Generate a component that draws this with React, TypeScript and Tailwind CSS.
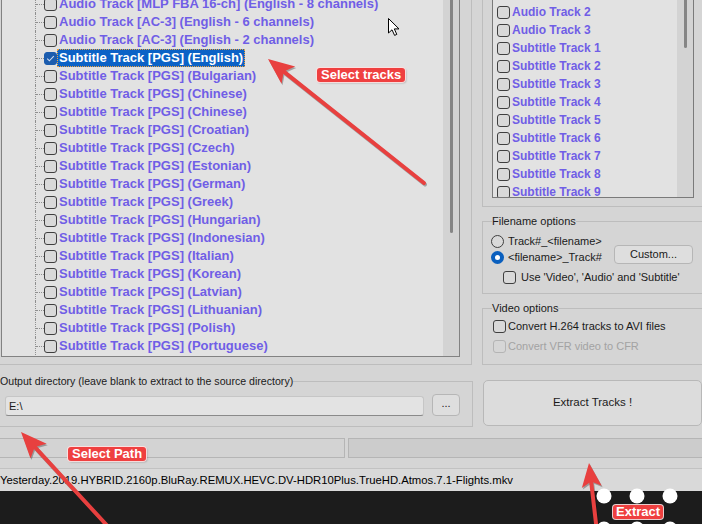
import React from "react";

const LEFT = [
  "Audio Track [MLP FBA 16-ch] (English - 8 channels)",
  "Audio Track [AC-3] (English - 6 channels)",
  "Audio Track [AC-3] (English - 2 channels)",
  "Subtitle Track [PGS] (English)",
  "Subtitle Track [PGS] (Bulgarian)",
  "Subtitle Track [PGS] (Chinese)",
  "Subtitle Track [PGS] (Chinese)",
  "Subtitle Track [PGS] (Croatian)",
  "Subtitle Track [PGS] (Czech)",
  "Subtitle Track [PGS] (Estonian)",
  "Subtitle Track [PGS] (German)",
  "Subtitle Track [PGS] (Greek)",
  "Subtitle Track [PGS] (Hungarian)",
  "Subtitle Track [PGS] (Indonesian)",
  "Subtitle Track [PGS] (Italian)",
  "Subtitle Track [PGS] (Korean)",
  "Subtitle Track [PGS] (Latvian)",
  "Subtitle Track [PGS] (Lithuanian)",
  "Subtitle Track [PGS] (Polish)",
  "Subtitle Track [PGS] (Portuguese)",
];

const RIGHT = [
  "Audio Track 2",
  "Audio Track 3",
  "Subtitle Track 1",
  "Subtitle Track 2",
  "Subtitle Track 3",
  "Subtitle Track 4",
  "Subtitle Track 5",
  "Subtitle Track 6",
  "Subtitle Track 7",
  "Subtitle Track 8",
  "Subtitle Track 9",
];

function Box({ checked = false, disabled = false }: { checked?: boolean; disabled?: boolean }) {
  if (checked) {
    return (
      <div className="flex h-[13px] w-[13px] shrink-0 items-center justify-center rounded-[3px] border border-[#1b5cae] bg-[#1b5cae]">
        <svg width="11" height="11" viewBox="0 0 11 11">
          <path d="M2.2 5.6 L4.4 7.8 L8.8 3.2" fill="none" stroke="#cfdcf0" strokeWidth="1.1" />
        </svg>
      </div>
    );
  }
  if (disabled) {
    return <div className="h-[13px] w-[13px] shrink-0 rounded-[3px] border border-[#b4b4b4] bg-[#d6d6d6]" />;
  }
  return <div className="h-[13px] w-[13px] shrink-0 rounded-[3px] border border-[#3f3f3f] bg-[#d9d9d9]" />;
}

function Arrow({ tx, ty, sx, sy, L = 26, W = 11 }: { tx: number; ty: number; sx: number; sy: number; L?: number; W?: number }) {
  const dx = tx - sx;
  const dy = ty - sy;
  const len = Math.hypot(dx, dy);
  const ux = dx / len;
  const uy = dy / len;
  const nx = -uy;
  const ny = ux;
  const bx = tx - L * ux;
  const by = ty - L * uy;
  const pts = [
    [tx, ty],
    [bx + W * nx, by + W * ny],
    [tx - 0.78 * L * ux, ty - 0.78 * L * uy],
    [bx - W * nx, by - W * ny],
  ]
    .map((p) => p.join(","))
    .join(" ");
  const ex = tx - 0.7 * L * ux;
  const ey = ty - 0.7 * L * uy;
  return (
    <g>
      <g transform="translate(1,1.5)" opacity="0.28">
        <line x1={sx} y1={sy} x2={ex} y2={ey} stroke="#000" strokeWidth="4" strokeLinecap="round" />
        <polygon points={pts} fill="#000" />
      </g>
      <line x1={sx} y1={sy} x2={ex} y2={ey} stroke="#e8403f" strokeWidth="4" strokeLinecap="round" />
      <polygon points={pts} fill="#e8403f" />
    </g>
  );
}

export default function App() {
  return (
    <div className="relative h-[524px] w-[702px] overflow-hidden bg-[#d5d5d5] font-['Liberation_Sans',Arial,sans-serif] text-[11px] text-[#1a1a1a]">
      {/* top row */}
      <div className="flex h-[365px]">
        {/* left container */}
        <div className="h-[365px] w-[472px] shrink-0 border-r border-b border-[#bdbdbd]">
          <div className="ml-[1px] flex h-[357px] w-[459px] overflow-hidden border-x border-b border-[#828282] bg-[#e2e2e2]">
            <div className="flex-1 overflow-hidden">
              <div className="-mt-[5px] flex flex-col">
                {LEFT.map((t, i) => {
                  const sel = i === 3;
                  return (
                    <div key={i} className="flex h-[18px] shrink-0 items-center">
                      <div className="w-[33px] shrink-0" />
                      <div className="flex h-full w-[9px] shrink-0 items-center border-l border-dotted border-[#8f8f8f]">
                        <div className="w-full border-t border-dotted border-[#8f8f8f]" />
                      </div>
                      <Box checked={sel} />
                      <span
                        className={
                          sel
                            ? "flex h-[18px] items-center whitespace-nowrap border border-dotted border-[#f0a23c] bg-[#0b62c6] px-[1px] text-[13px] font-bold text-white"
                            : "flex h-[18px] items-center whitespace-nowrap border border-transparent px-[1px] text-[13px] font-bold text-[#705ee6]"
                        }
                      >
                        {t}
                      </span>
                    </div>
                  );
                })}
              </div>
            </div>
            <div className="flex w-[16px] shrink-0 justify-center bg-[#d3d3d3]">
              <div className="h-[233px] w-[3px] rounded-b-full bg-[#858585]" />
            </div>
          </div>
        </div>

        {/* right container */}
        <div className="flex-1 overflow-visible pl-[10px]">
          <div className="flex h-[207px] w-[240px] flex-col justify-end border-l border-b border-[#bdbdbd] pl-[9px] pb-[8px]">
            <div className="flex h-[198px] w-[202px] overflow-hidden border-x border-b border-[#7a7a7a] bg-[#e2e2e2]">
              <div className="flex-1 overflow-hidden pt-[3px]">
                {RIGHT.map((t, i) => (
                  <div key={i} className="flex h-[18px] items-center pl-[4px]">
                    <Box />
                    <span className="ml-[2px] whitespace-nowrap text-[12px] font-bold text-[#705ee6]">{t}</span>
                  </div>
                ))}
              </div>
              <div className="flex w-[16px] shrink-0 justify-center bg-[#d3d3d3]">
                <div className="h-[48px] w-[3px] rounded-b-full bg-[#858585]" />
              </div>
            </div>
          </div>

          <fieldset className="mt-[8px] h-[79px] w-[240px] border border-[#bdbdbd]">
            <legend className="ml-[9px] px-0 text-[11px] leading-[13px]">Filename options</legend>
            <div className="flex flex-col pl-[8px] pt-[5px]">
              <div className="flex h-[16px] items-center">
                <div className="h-[13px] w-[13px] rounded-full border border-[#3f3f3f] bg-[#d9d9d9]" />
                <span className="ml-[4px] whitespace-nowrap">Track#_&lt;filename&gt;</span>
              </div>
              <div className="flex h-[16px] items-center">
                <div className="flex h-[13px] w-[13px] items-center justify-center rounded-full bg-[#0a5fbe]">
                  <div className="h-[5px] w-[5px] rounded-full bg-white" />
                </div>
                <span className="ml-[4px] w-[106px] whitespace-nowrap">&lt;filename&gt;_Track#</span>
                <div className="mb-[5px] flex h-[19px] w-[79px] items-center justify-center rounded-[4px] border border-[#b6b6b6] bg-[#dedede]">
                  Custom...
                </div>
              </div>
              <div className="mt-[4px] flex h-[16px] items-center pl-[12px]">
                <Box />
                <span className="ml-[5px] whitespace-nowrap">Use 'Video', 'Audio' and 'Subtitle'</span>
              </div>
            </div>
          </fieldset>

          <fieldset className="mt-[8px] h-[63px] w-[240px] border border-[#bdbdbd]">
            <legend className="ml-[9px] px-0 text-[11px] leading-[13px]">Video options</legend>
            <div className="flex flex-col pl-[10px] pt-[3px]">
              <div className="flex h-[16px] items-center">
                <Box />
                <span className="ml-[2px] whitespace-nowrap">Convert H.264 tracks to AVI files</span>
              </div>
              <div className="mt-[4px] flex h-[16px] items-center">
                <Box disabled />
                <span className="ml-[2px] whitespace-nowrap text-[#a3a3a3]">Convert VFR video to CFR</span>
              </div>
            </div>
          </fieldset>
        </div>
      </div>

      {/* output row */}
      <div className="flex h-[73px] items-start">
        <fieldset className="-ml-[9px] mt-[10px] h-[52px] w-[482px] shrink-0 border border-[#bdbdbd]">
          <legend className="ml-[8px] px-0 text-[10.6px] leading-[13px]">
            Output directory (leave blank to extract to the source directory)
          </legend>
          <div className="flex items-end pl-[13px] pt-[6px]">
            <div className="flex h-[20px] w-[419px] items-center rounded-[3px] border border-[#c6c6c6] border-b-[#8a8a8a] bg-[#e3e3e3] pl-[3px]">
              E:\
            </div>
            <div className="ml-[8px] flex h-[22px] w-[28px] items-center justify-center rounded-[4px] border border-[#b6b6b6] bg-[#dedede] pb-[3px]">
              ...
            </div>
          </div>
        </fieldset>
        <div className="ml-[10px] mt-[15px] flex h-[46px] w-[219px] shrink-0 items-center justify-center rounded-[5px] border border-[#b8b8b8] bg-[#dcdcdc] text-[11.5px]">
          Extract Tracks !
        </div>
      </div>

      {/* progress bars */}
      <div className="flex h-[20px]">
        <div className="-ml-[5px] h-[20px] w-[350px] shrink-0 border border-[#b5b5b5] bg-[#d3d3d3]" />
        <div className="ml-[3px] h-[20px] w-[360px] shrink-0 border border-[#b5b5b5] bg-[#cccccc]" />
      </div>

      {/* status bar */}
      <div className="mt-[10px] flex h-[23px] items-center border-t border-[#c2c2c2] bg-[#d9d9d9] text-[11.3px] text-black">
        <span className="whitespace-nowrap">
          Yesterday.2019.HYBRID.2160p.BluRay.REMUX.HEVC.DV-HDR10Plus.TrueHD.Atmos.7.1-Flights.mkv
        </span>
      </div>

      {/* dark bottom */}
      <div className="h-[33px] bg-[#1c1c1c]" />

      {/* annotations overlay */}
      <svg className="pointer-events-none absolute left-0 top-0" width="702" height="524" viewBox="0 0 702 524">
        <circle cx="604" cy="496" r="7.5" fill="#fff" />
        <circle cx="637" cy="496" r="7.5" fill="#fff" />
        <circle cx="670" cy="496" r="7.5" fill="#fff" />
        <circle cx="604" cy="529" r="7.5" fill="#fff" />
        <circle cx="637" cy="529" r="7.5" fill="#fff" />
        <circle cx="670" cy="529" r="7.5" fill="#fff" />
        <Arrow tx={268} ty={59} sx={424} sy={183} />
        <Arrow tx={21} ty={432} sx={113} sy={532} />
        <Arrow tx={589} ty={463} sx={597} sy={532} L={24} W={10} />
        <path
          d="M388.5 18.5 L388.5 33 L392 29.8 L394.6 35.4 L396.8 34.4 L394.3 28.9 L399 28.9 Z"
          fill="#fff"
          stroke="#000"
          strokeWidth="1"
          strokeLinejoin="miter"
        />
      </svg>

      <div className="absolute left-[317px] top-[68px] rounded-[3px] bg-[#ef4040] px-[4px] text-[13px] font-bold leading-[14px] text-white shadow-[0_0_0_1px_rgba(255,225,225,0.9),1px_1px_2px_rgba(0,0,0,0.35)]">
        Select tracks
      </div>
      <div className="absolute left-[68px] top-[447px] rounded-[3px] bg-[#ef4040] px-[4px] text-[13px] font-bold leading-[14px] text-white shadow-[0_0_0_1px_rgba(255,225,225,0.9),1px_1px_2px_rgba(0,0,0,0.35)]">
        Select Path
      </div>
      <div className="absolute left-[613px] top-[505px] rounded-[3px] bg-[#ef4040] px-[3px] text-[13px] font-bold leading-[14px] text-white shadow-[0_0_0_1px_rgba(255,225,225,0.9),1px_1px_2px_rgba(0,0,0,0.35)]">
        Extract
      </div>
    </div>
  );
}
